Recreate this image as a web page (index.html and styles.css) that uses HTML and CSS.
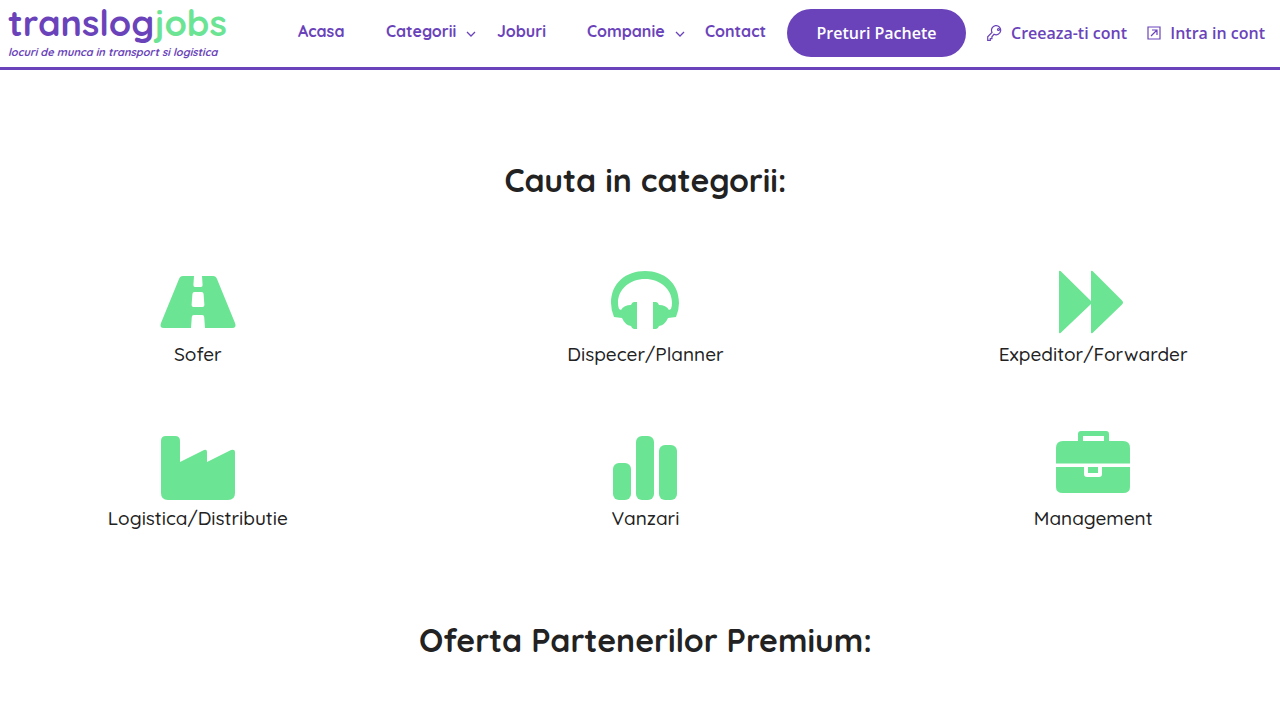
FILE: index.html
```html
<!DOCTYPE html>
<html lang="ro">
<head>
<meta charset="utf-8">
<meta name="viewport" content="width=device-width, initial-scale=1">
<title>Translogjobs</title>
<link rel="stylesheet" href="styles.css">
</head>
<body>
<header class="header">
  <a class="logo" href="#">
    <span class="logo-name">translog<span class="logo-accent">jobs</span></span>
    <span class="logo-tagline">locuri de munca in transport si logistica</span>
  </a>
  <nav class="nav">
    <a href="#">Acasa</a>
    <a href="#">Categorii<svg class="chevron" viewBox="0 0 10 6"><path d="M1 1l4 4 4-4"/></svg></a>
    <a href="#">Joburi</a>
    <a href="#">Companie<svg class="chevron" viewBox="0 0 10 6"><path d="M1 1l4 4 4-4"/></svg></a>
    <a href="#">Contact</a>
  </nav>
  <button class="pricing" type="button">Preturi Pachete</button>
  <div class="account">
    <a href="#"><svg class="account-icon" viewBox="0 0 16 16"><path d="M7 9.300a4.600 4.600 0 1 0-2-2L.7 11.800v3.500h2.600v-1.700h1.600v-1.800z"/><circle cx="11.500" cy="4.500" r="1"/></svg>Creeaza-ti cont</a>
    <a href="#"><svg class="account-icon" viewBox="0 0 16 16"><path d="M2 2h12v12H2zM5 11l6-6M6 5h5v5"/></svg>Intra in cont</a>
  </div>
</header>
<main>
  <h2 class="title">Cauta in categorii:</h2>
  <div class="categories">
    <a class="category" href="#">
      <svg class="icon" viewBox="0 0 76 66"><path d="M19 8q1-3 4-3h11l-.6 9q-.1 2 1.600 2h6q1.700 0 1.600-2L42 5h11q3 0 4 3l18 44q2 5-3 5H45l-.8-11q-.1-2-2-2h-8.400q-1.900 0-2 2L31 57H4q-5 0-3-5zM34.500 21q-2 0-2.100 2l-.8 11q-.1 2 1.900 2h9q2 0 1.900-2l-.8-11q-.1-2-2.100-2z"/></svg>
      <span>Sofer</span>
    </a>
    <a class="category" href="#">
      <svg class="icon" viewBox="0 0 76 66"><path d="M7 46Q4 39 4 32C4 12 19 0 38 0s34 12 34 32q0 7-3 14l-8 1q-3 7-9 8-1 3-3 3h-3V31h3q2 0 3 3 7 0 10 5l2-1q1-3 1-6C65 18 53 8 38 8S11 18 11 32q0 3 1 6l2 1q3-5 10-5 1-3 3-3h3v27h-3q-2 0-3-3-6-1-9-8z"/></svg>
      <span>Dispecer/Planner</span>
    </a>
    <a class="category" href="#">
      <svg class="icon" viewBox="0 0 76 66"><path d="M4 1q0-2 1.500-1L36 30V1q0-2 1.500-1L67 29.500q2 2 0 4L37.500 62Q36 63 36 61V33L5.500 62Q4 63 4 61z"/></svg>
      <span>Expeditor/Forwarder</span>
    </a>
    <a class="category" href="#">
      <svg class="icon" viewBox="0 0 76 66"><path d="M1 6q0-5 5-5h9q5 0 5 5v21l24-12q3-1 3 2v10l24-12q4-1 4 2v41q0 7-7 7H8q-7 0-7-7z"/></svg>
      <span>Logistica/Distributie</span>
    </a>
    <a class="category" href="#">
      <svg class="icon" viewBox="0 0 76 66"><rect x="6" y="28" width="18" height="37" rx="6"/><rect x="29" y="1" width="18" height="64" rx="6"/><rect x="52" y="10" width="18" height="55" rx="6"/></svg>
      <span>Vanzari</span>
    </a>
    <a class="category" href="#">
      <svg class="icon" viewBox="0 0 76 66"><path d="M23 6V-1q0-3 3-3h25q3 0 3 3v7h14q7 0 7 7v15.500H1V13q0-7 7-7zM28 6h21V1H28zM1 32h28v7q0 3 3 3h12q3 0 3-3v-7h28v20q0 6-7 6H8q-7 0-7-6zM33 32h10v6H33z" fill-rule="evenodd"/></svg>
      <span>Management</span>
    </a>
  </div>
  <h2 class="title">Oferta Partenerilor Premium:</h2>
</main>
</body>
</html>
```
FILE: styles.css
```css
* { box-sizing: border-box; }
body {
  margin: 0;
  background: #fff;
  color: #222;
  font-family: Quicksand, Lato, sans-serif;
}
a { color: inherit; text-decoration: none; }
.header {
  display: flex;
  height: 70px;
  padding: 0 15px 0 8px;
  border-bottom: 3px solid #6a43ba;
  color: #6a43ba;
}
.logo {
  display: flex;
  flex-direction: column;
  width: 290px;
  white-space: nowrap;
}
.logo-name { font-size: 36px; line-height: 45px; font-weight: 700; }
.logo-accent { color: #6be493; }
.logo-tagline { font-size: 11px; line-height: 14px; font-weight: 700; font-style: italic; }
.nav {
  display: grid;
  grid-template-columns: 88px 111px 90px 118px 60px;
  align-items: start;
  padding-top: 21px;
  font-size: 16px;
  line-height: 20px;
  font-weight: 700;
}
.nav a { white-space: nowrap; }
.chevron {
  width: 10px;
  height: 6px;
  margin-left: 10px;
  fill: none;
  stroke: currentColor;
  stroke-width: 1.300;
}
.pricing {
  align-self: start;
  width: 179px;
  height: 48px;
  margin: 9px 0 0 22px;
  padding: 0;
  border: 0;
  border-radius: 24px;
  background: #6a43ba;
  color: #fff;
  font: 600 16px/20px "Open Sans", sans-serif;
}
.account {
  display: flex;
  justify-content: space-between;
  flex: 1;
  padding: 23px 0 0 21px;
  font: 600 16px/20px "Open Sans", sans-serif;
  white-space: nowrap;
}
.account a { display: flex; align-items: start; gap: 8px; }
.account-icon {
  width: 16px;
  height: 16px;
  margin-top: 2px;
  fill: none;
  stroke: currentColor;
  stroke-width: 1.200;
}
.title {
  margin: 89px 0 0;
  padding-left: 11px;
  text-align: center;
  font-size: 32px;
  line-height: 42px;
  font-weight: 700;
}
.categories {
  display: grid;
  grid-template-columns: repeat(3, 1fr);
  gap: 69px 92px;
  margin-top: 70px;
  padding: 0 9px 0 20px;
}
.category {
  display: flex;
  flex-direction: column;
  align-items: center;
  font-size: 19px;
  line-height: 24px;
  font-weight: 500;
}
.icon { width: 76px; height: 66px; overflow: visible; fill: #6be493; }
.category span { padding-top: 5px; }
```
